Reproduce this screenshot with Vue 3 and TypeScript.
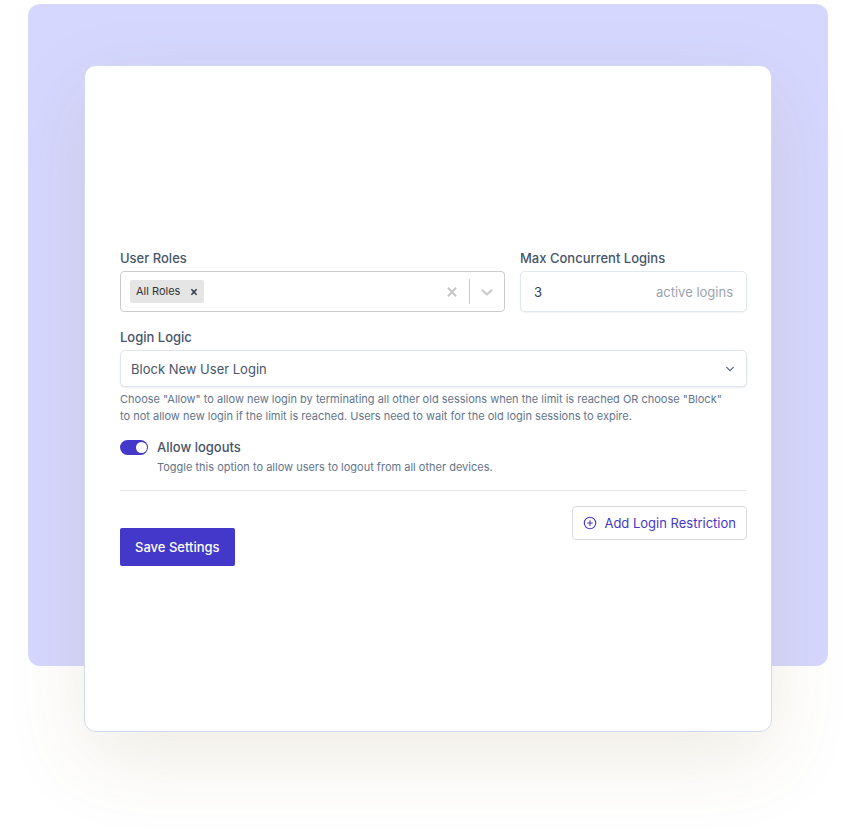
<script setup lang="ts">
import { ref } from 'vue'

const roles = ref<string[]>(['All Roles'])
const roleQuery = ref('')
const maxLogins = ref('3')
const logic = ref('block')
const allowLogouts = ref(true)

const logicOptions = [
  { value: 'block', label: 'Block New User Login' },
  { value: 'allow', label: 'Allow New User Login' },
]

function removeRole(role: string) {
  roles.value = roles.value.filter((r) => r !== role)
}
</script>

<template>
  <main class="page">
    <div class="stage">
      <form class="card" @submit.prevent>
        <div class="row">
          <div class="field">
            <label class="label" for="roles">User Roles</label>
            <div class="box roles">
              <span v-for="role in roles" :key="role" class="tag">
                {{ role }}
                <button type="button" class="plain" :aria-label="`Remove ${role}`" @click="removeRole(role)">
                  <svg width="8" height="8" viewBox="0 0 8 8"><path d="M1.4 1.2l5.2 5.6M6.6 1.2L1.4 6.8" stroke="#333d4d" stroke-width="1.6" /></svg>
                </button>
              </span>
              <input id="roles" v-model="roleQuery" class="bare" type="text" autocomplete="off" />
              <button type="button" class="plain" aria-label="Clear roles" @click="roles = []">
                <svg width="12" height="12" viewBox="0 0 12 12"><path d="M2 1.7l8 8.6M10 1.7l-8 8.6" stroke="#c8c8c8" stroke-width="2.2" /></svg>
              </button>
              <span class="separator"></span>
              <button type="button" class="plain" aria-label="Open roles">
                <svg width="12" height="12" viewBox="0 0 12 12"><path d="M1.4 4.2L6 8.4l4.6-4.2" fill="none" stroke="#c8c8c8" stroke-width="2" stroke-linecap="round" stroke-linejoin="round" /></svg>
              </button>
            </div>
          </div>
          <div class="field">
            <label class="label" for="max">Max Concurrent Logins</label>
            <div class="box max">
              <input id="max" v-model="maxLogins" class="bare" type="text" inputmode="numeric" />
              <span class="suffix">active logins</span>
            </div>
          </div>
        </div>

        <div class="field logic">
          <label class="label" for="logic">Login Logic</label>
          <div class="select-wrap">
            <select id="logic" v-model="logic" class="select" aria-describedby="logic-help">
              <option v-for="o in logicOptions" :key="o.value" :value="o.value">{{ o.label }}</option>
            </select>
            <svg class="chevron" width="10" height="10" viewBox="0 0 10 10"><path d="M1.7 3.4L5 6.6l3.3-3.2" fill="none" stroke="#526078" stroke-width="1.2" stroke-linecap="round" stroke-linejoin="round" /></svg>
          </div>
          <p id="logic-help" class="help">
            Choose "Allow" to allow new login by terminating all other old sessions when the limit is reached OR choose "Block"<br />
            to not allow new login if the limit is reached. Users need to wait for the old login sessions to expire.
          </p>
        </div>

        <div class="toggle">
          <input id="logouts" v-model="allowLogouts" class="switch" type="checkbox" role="switch" aria-describedby="logouts-help" />
          <div>
            <label class="label" for="logouts">Allow logouts</label>
            <p id="logouts-help" class="help">Toggle this option to allow users to logout from all other devices.</p>
          </div>
        </div>

        <div class="actions">
          <button type="submit" class="save">Save Settings</button>
          <button type="button" class="add">
            <svg width="14" height="14" viewBox="0 0 14 14" fill="none" stroke="#4338ca" stroke-width="1.1" stroke-linecap="round"><circle cx="7" cy="7" r="5.7" /><path d="M7 4.6v4.8M4.6 7h4.8" /></svg>
            Add Login Restriction
          </button>
        </div>
      </form>
    </div>
  </main>
</template>

<style>
body {
  background: #fff;
}
</style>

<style scoped>
* {
  box-sizing: border-box;
}
.page {
  min-height: 100vh;
  padding: 4px 28px 100px;
}
.stage {
  display: flex;
  flex-direction: column;
  padding: 61px 56px 0;
  border-radius: 12px;
  background: #d6d7ff;
  font-family: Inter, "Liberation Sans", sans-serif;
  color: #475569;
}
.card {
  margin-bottom: -66px;
  padding: 183px 24px 165px 35px;
  border: 1px solid #d0d9f3;
  border-radius: 12px;
  background: #fff;
  box-shadow: 0 26px 80px rgba(128, 108, 40, 0.13);
}
.row {
  display: grid;
  grid-template-columns: 385fr 227fr;
  gap: 15px;
}
.field {
  display: flex;
  flex-direction: column;
  min-width: 0;
}
.label {
  display: block;
  font-size: 13px;
  line-height: 18px;
  font-weight: 500;
}
.field > .label {
  margin-bottom: 4px;
}
.box {
  display: flex;
  align-items: center;
  height: 41px;
  border: 1px solid #ccc;
  border-radius: 4px;
  background: #fff;
}
.roles {
  padding: 0 11px 0 9px;
}
.tag {
  display: flex;
  align-items: center;
  gap: 10px;
  padding: 0 6px;
  border-radius: 2px;
  background: #e5e5e5;
  color: #333;
  font-size: 11px;
  line-height: 23px;
  white-space: nowrap;
}
.plain {
  display: flex;
  padding: 0;
  border: 0;
  background: none;
}
.bare {
  flex: 1;
  min-width: 0;
  width: 0;
  padding: 0;
  border: 0;
  outline: 0;
  background: none;
  font: inherit;
  font-size: 13px;
  color: #334155;
}
.separator {
  width: 1px;
  height: 25px;
  margin: 0 11px;
  background: #ccc;
}
.max {
  padding: 0 13px;
  border-color: #e2e8f0;
  border-radius: 5px;
  box-shadow: 0 1px 2px rgba(15, 23, 42, 0.06);
}
.suffix {
  color: #9ca3af;
  font-size: 13px;
}
.logic {
  margin-top: 16px;
}
.select-wrap {
  display: grid;
  align-items: center;
}
.select-wrap > * {
  grid-area: 1 / 1;
}
.select {
  appearance: none;
  width: 100%;
  height: 37px;
  padding: 0 32px 0 10px;
  border: 1px solid #dfe5ee;
  border-radius: 5px;
  background: #fff;
  box-shadow: 0 1px 2px rgba(15, 23, 42, 0.08);
  color: #475569;
  font: inherit;
  font-size: 13px;
}
.chevron {
  justify-self: end;
  margin-right: 12px;
  pointer-events: none;
}
.help {
  margin: 0;
  color: #64748b;
  font-size: 11px;
  line-height: 17px;
}
.logic .help {
  margin-top: 4px;
}
.toggle {
  display: flex;
  align-items: flex-start;
  gap: 9px;
  margin-top: 13px;
  padding-bottom: 14px;
  border-bottom: 1px solid #e5e7eb;
}
.toggle .help {
  margin-top: 3px;
}
.switch {
  appearance: none;
  display: flex;
  align-items: center;
  width: 28px;
  height: 15px;
  margin: 2px 0 0;
  padding: 0 2px;
  border-radius: 8px;
  background: #cbd5e1;
}
.switch::before {
  content: "";
  width: 11px;
  height: 11px;
  border-radius: 50%;
  background: #fff;
}
.switch:checked {
  justify-content: flex-end;
  padding-right: 1px;
  background: #4338ca;
}
.actions {
  display: flex;
  justify-content: space-between;
  align-items: flex-start;
  padding-top: 15px;
}
.save,
.add {
  font: inherit;
  font-size: 13px;
  white-space: nowrap;
}
.save {
  height: 38px;
  margin-top: 22px;
  padding: 0 15px;
  border: 0;
  border-radius: 2px;
  background: #4338ca;
  color: #fff;
  font-weight: 500;
}
.add {
  display: flex;
  align-items: center;
  gap: 7px;
  height: 34px;
  padding: 0 10px;
  border: 1px solid #d9dbe0;
  border-radius: 4px;
  background: #fff;
  color: #4338ca;
}
</style>
